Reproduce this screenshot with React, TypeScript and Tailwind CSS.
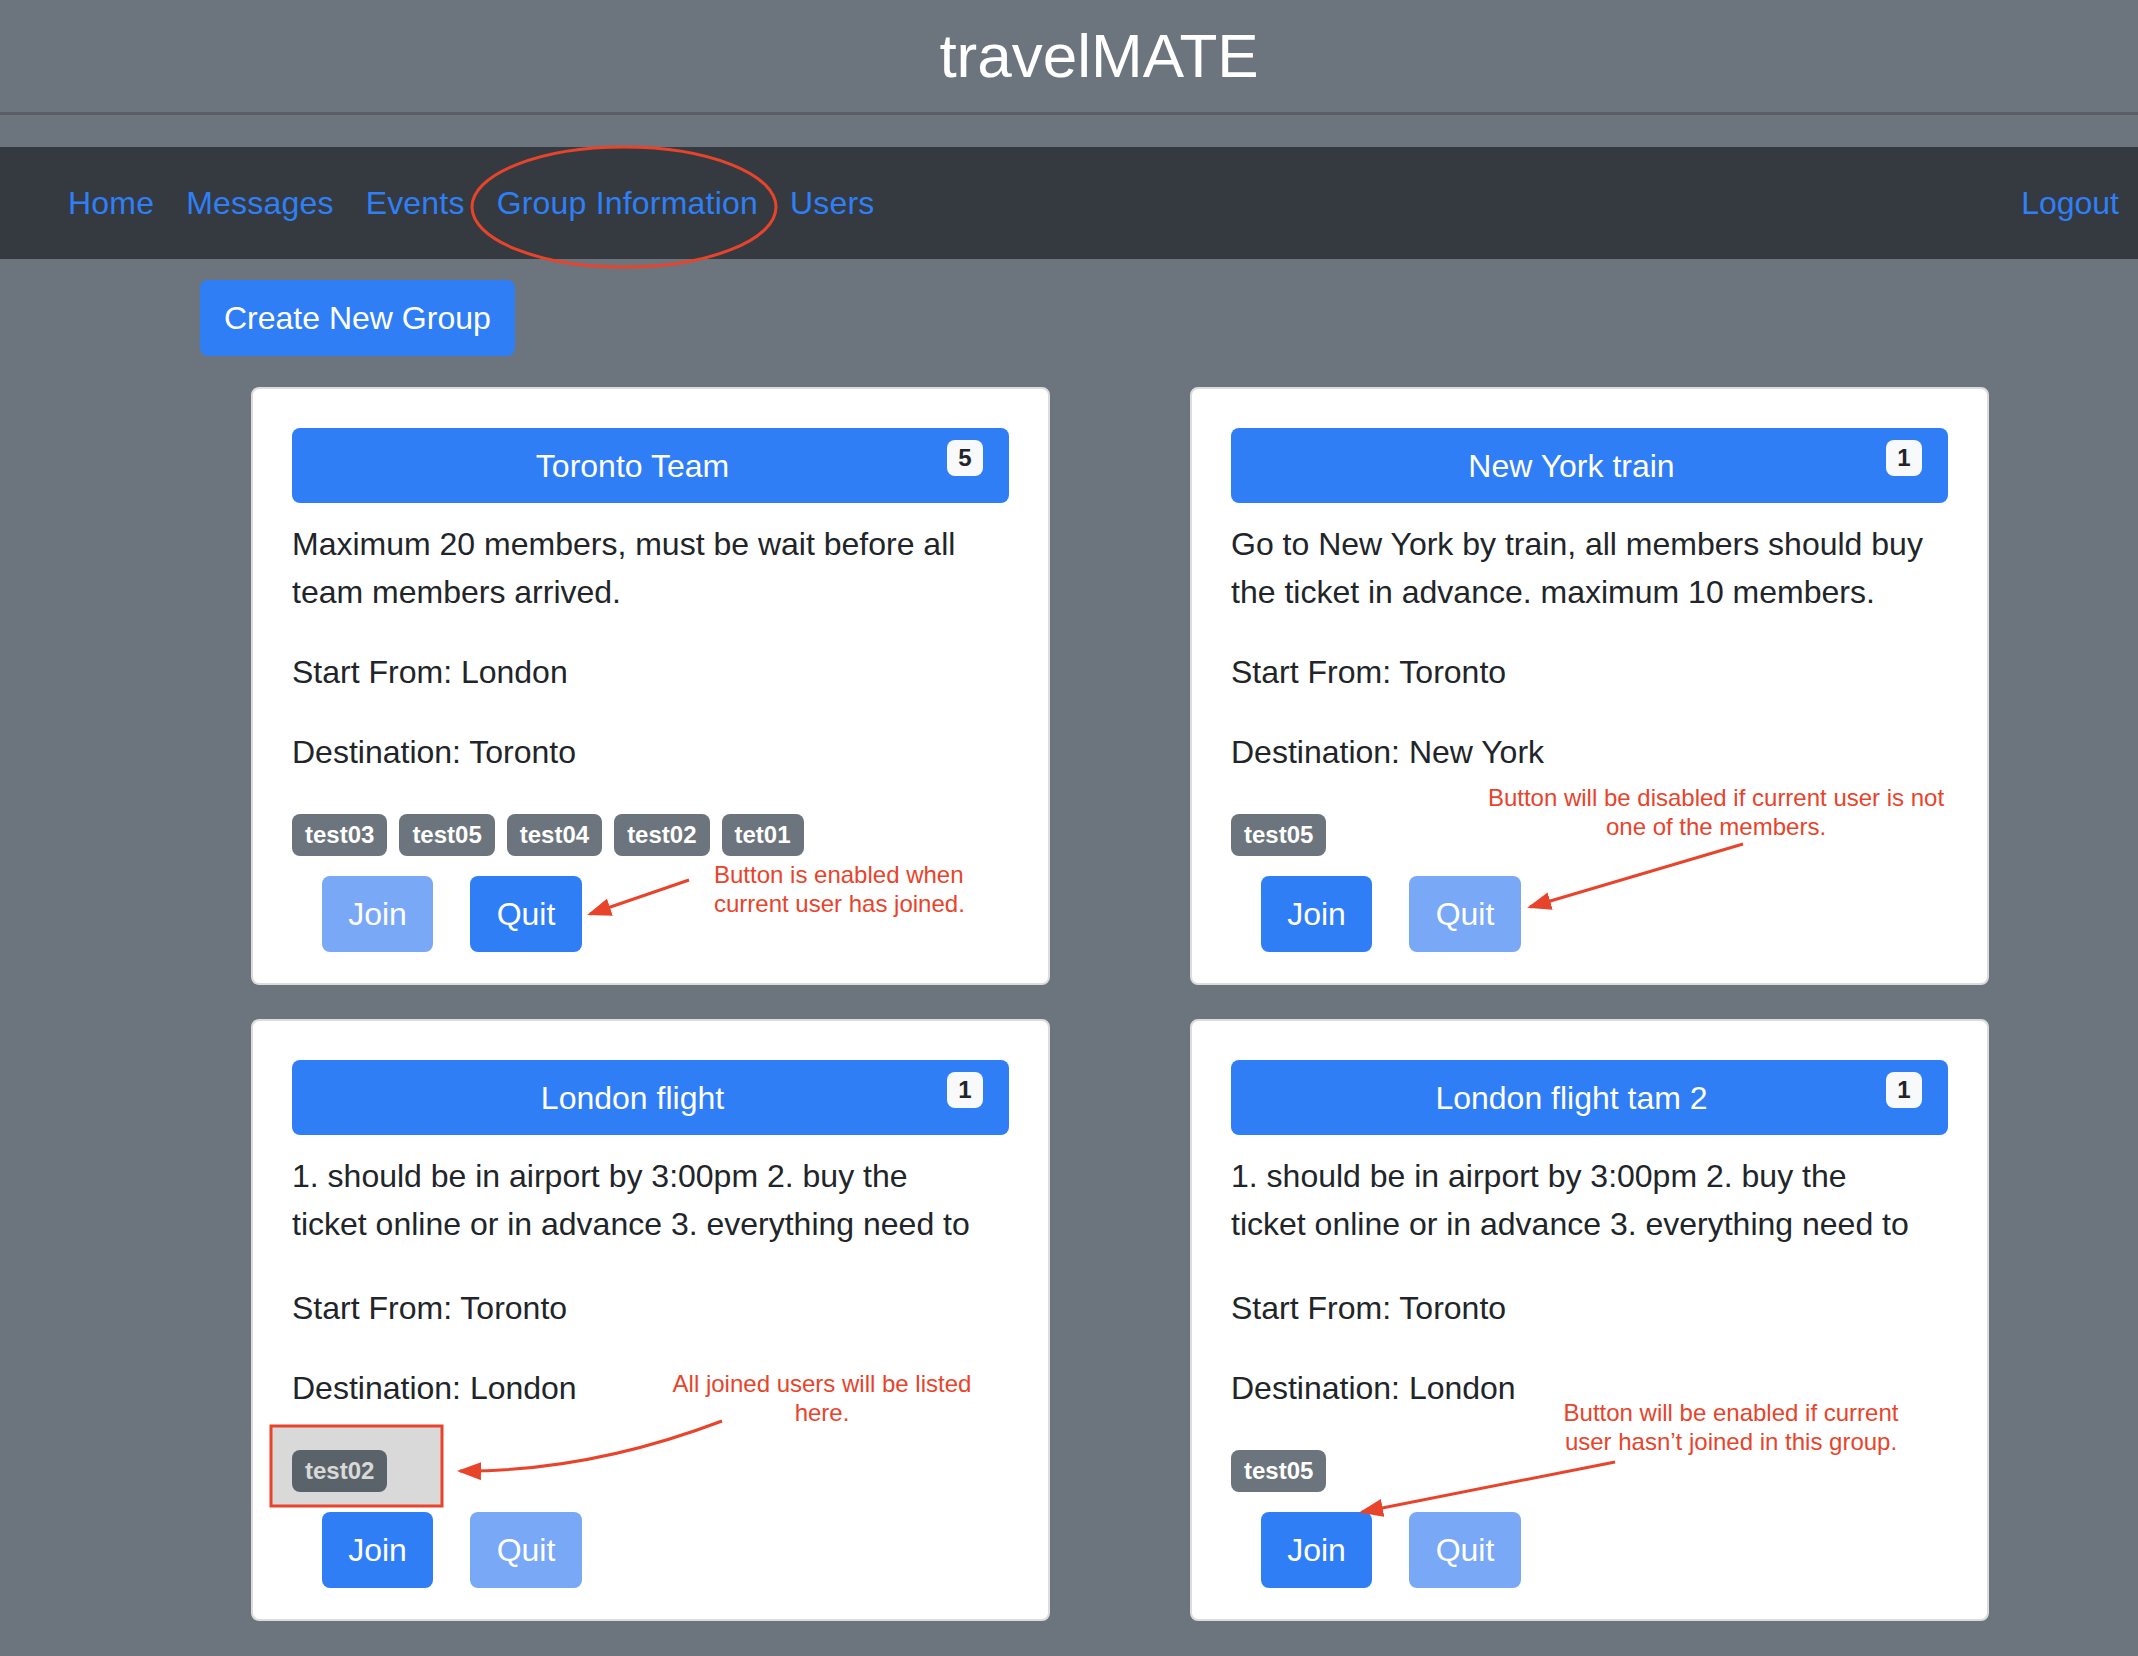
import React from 'react';

type Group = {
  title: string;
  count: number;
  description: string;
  from: string;
  to: string;
  members: string[];
  canJoin: boolean;
  canQuit: boolean;
  descClass: string;
};

const groups: Group[] = [
  {
    title: 'Toronto Team',
    count: 5,
    description: 'Maximum 20 members, must be wait before all team members arrived.',
    from: 'London',
    to: 'Toronto',
    members: ['test03', 'test05', 'test04', 'test02', 'tet01'],
    canJoin: false,
    canQuit: true,
    descClass: 'h-[96px]',
  },
  {
    title: 'New York train',
    count: 1,
    description: 'Go to New York by train, all members should buy the ticket in advance. maximum 10 members.',
    from: 'Toronto',
    to: 'New York',
    members: ['test05'],
    canJoin: true,
    canQuit: false,
    descClass: 'h-[96px]',
  },
  {
    title: 'London flight',
    count: 1,
    description: '1. should be in airport by 3:00pm 2. buy the ticket online or in advance 3. everything need to',
    from: 'Toronto',
    to: 'London',
    members: ['test02'],
    canJoin: true,
    canQuit: false,
    descClass: 'h-[100px] w-[696px]',
  },
  {
    title: 'London flight tam 2',
    count: 1,
    description: '1. should be in airport by 3:00pm 2. buy the ticket online or in advance 3. everything need to',
    from: 'Toronto',
    to: 'London',
    members: ['test05'],
    canJoin: true,
    canQuit: false,
    descClass: 'h-[100px] w-[696px]',
  },
];

function GroupCard({ group }: { group: Group }) {
  return (
    <div className="w-[799px] bg-white border-2 border-[#dcdcdc] rounded-[8px] px-[39px] pt-[39px] pb-[31px]">
      <div className="h-[75px] rounded-[8px] bg-[#2f7ef6] flex items-center px-[26px] text-white">
        <span className="flex-1 text-center text-[32px]">{group.title}</span>
        <span className="self-start mt-[12px] w-[36px] h-[36px] rounded-[8px] bg-[#f8f9fa] text-[#212529] font-bold text-[24px] flex items-center justify-center">
          {group.count}
        </span>
      </div>
      <p className={`mt-[17px] text-[32px] leading-[48px] text-[#212529] ${group.descClass}`}>
        {group.description}
      </p>
      <p className="mt-[32px] text-[32px] leading-[48px] text-[#212529]">Start From: {group.from}</p>
      <p className="mt-[32px] text-[32px] leading-[48px] text-[#212529]">Destination: {group.to}</p>
      <div className="mt-[38px] flex gap-[12px]">
        {group.members.map(m => (
          <span
            key={m}
            className="h-[42px] px-[13px] rounded-[8px] bg-[#6c757d] text-white font-bold text-[24px] flex items-center"
          >
            {m}
          </span>
        ))}
      </div>
      <div className="mt-[20px] flex">
        <button
          className={`ml-[30px] h-[76px] w-[111px] rounded-[8px] text-[32px] text-white ${
            group.canJoin ? 'bg-[#2f7ef6]' : 'bg-[#79a8f7]'
          }`}
        >
          Join
        </button>
        <button
          className={`ml-[37px] h-[76px] w-[112px] rounded-[8px] text-[32px] text-white ${
            group.canQuit ? 'bg-[#2f7ef6]' : 'bg-[#79a8f7]'
          }`}
        >
          Quit
        </button>
      </div>
    </div>
  );
}

function Annotations() {
  const red = '#e8442c';
  return (
    <>
      <svg className="absolute left-0 top-0 pointer-events-none" width="2138" height="1656">
        <defs>
          <marker id="head" markerWidth="8" markerHeight="6" refX="7" refY="3" orient="auto" markerUnits="strokeWidth">
            <path d="M0,0 L8,3 L0,6 Z" fill={red} />
          </marker>
        </defs>
        <ellipse cx="624" cy="207" rx="152" ry="60" fill="none" stroke={red} strokeWidth="3" />
        <line x1="689" y1="880" x2="590" y2="914" stroke={red} strokeWidth="3" markerEnd="url(#head)" />
        <line x1="1743" y1="844" x2="1530" y2="907" stroke={red} strokeWidth="3" markerEnd="url(#head)" />
        <path d="M722 1421 Q588 1472 460 1471" fill="none" stroke={red} strokeWidth="3" markerEnd="url(#head)" />
        <line x1="1615" y1="1462" x2="1362" y2="1512" stroke={red} strokeWidth="3" markerEnd="url(#head)" />
        <rect x="271" y="1426" width="171" height="80" fill="rgba(0,0,0,0.15)" stroke={red} strokeWidth="3" />
      </svg>
      <div className="absolute left-[714px] top-[860px] text-[24px] leading-[29px] text-[#e8442c] whitespace-nowrap">
        Button is enabled when
        <br />
        current user has joined.
      </div>
      <div className="absolute left-[1476px] top-[783px] w-[480px] text-center text-[24px] leading-[29px] text-[#e8442c] whitespace-nowrap">
        Button will be disabled if current user is not
        <br />
        one of the members.
      </div>
      <div className="absolute left-[652px] top-[1369px] w-[340px] text-center text-[24px] leading-[29px] text-[#e8442c] whitespace-nowrap">
        All joined users will be listed
        <br />
        here.
      </div>
      <div className="absolute left-[1531px] top-[1398px] w-[400px] text-center text-[24px] leading-[29px] text-[#e8442c] whitespace-nowrap">
        Button will be enabled if current
        <br />
        user hasn’t joined in this group.
      </div>
    </>
  );
}

export default function App() {
  const links = ['Home', 'Messages', 'Events', 'Group Information', 'Users'];
  return (
    <div className="relative w-[2138px] h-[1656px] overflow-hidden bg-[#6c757d] font-['Liberation_Sans',Arial,sans-serif]">
      <header className="h-[115px] border-b-[3px] border-[#595f65] flex items-center justify-center pl-[60px]">
        <h1 className="text-[62px] leading-none text-white font-medium">travelMATE</h1>
      </header>
      <nav className="mt-[32px] h-[112px] bg-[#343a40] flex items-center justify-between pl-[52px] pr-[3px]">
        <div className="flex">
          {links.map(l => (
            <a key={l} className="px-[16px] text-[32px] text-[#2f7ff7] tracking-[0.2px]">
              {l}
            </a>
          ))}
        </div>
        <a className="px-[16px] text-[32px] text-[#2f7ff7]">Logout</a>
      </nav>
      <main className="pl-[200px]">
        <button className="mt-[21px] h-[76px] px-[24px] rounded-[8px] bg-[#2f7ef6] text-white text-[32px]">
          Create New Group
        </button>
        <div className="mt-[31px] ml-[51px] grid grid-cols-[799px_799px] gap-x-[140px] gap-y-[34px]">
          {groups.map(g => (
            <GroupCard key={g.title} group={g} />
          ))}
        </div>
      </main>
      <Annotations />
    </div>
  );
}
